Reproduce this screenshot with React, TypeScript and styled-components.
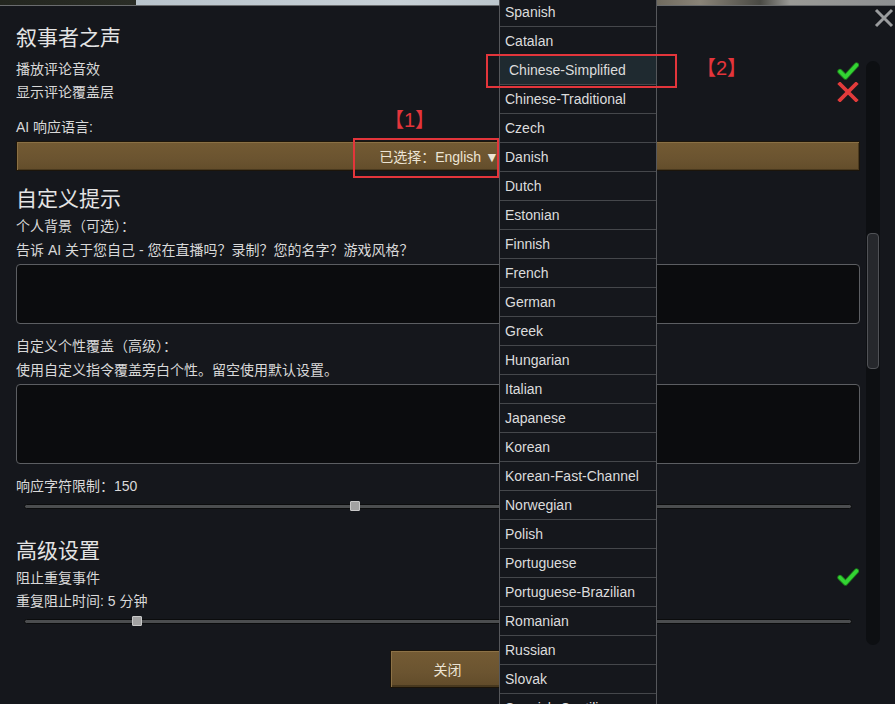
import styled, { createGlobalStyle } from "styled-components";

const GlobalStyle = createGlobalStyle`
  html, body {
    margin: 0;
    padding: 0;
    background: #15171c;
  }
  * {
    box-sizing: border-box;
  }
`;

const languages = [
  "Spanish",
  "Catalan",
  "Chinese-Simplified",
  "Chinese-Traditional",
  "Czech",
  "Danish",
  "Dutch",
  "Estonian",
  "Finnish",
  "French",
  "German",
  "Greek",
  "Hungarian",
  "Italian",
  "Japanese",
  "Korean",
  "Korean-Fast-Channel",
  "Norwegian",
  "Polish",
  "Portuguese",
  "Portuguese-Brazilian",
  "Romanian",
  "Russian",
  "Slovak",
  "Spanish-Castilian",
];

const CheckIcon = () => (
  <svg width="22" height="18" viewBox="0 0 22 18">
    <path
      d="M3 9.5 L8.5 15 L19.5 3"
      fill="none"
      stroke="#1d7a1d"
      strokeWidth="5.4"
      strokeLinecap="round"
      strokeLinejoin="round"
    />
    <path
      d="M3 9.5 L8.5 15 L19.5 3"
      fill="none"
      stroke="#33d433"
      strokeWidth="3.6"
      strokeLinecap="round"
      strokeLinejoin="round"
    />
  </svg>
);

const CrossIcon = () => (
  <svg width="22" height="20" viewBox="0 0 22 20">
    <path
      d="M3 2 L19 18 M19 2 L3 18"
      fill="none"
      stroke="#e23b3b"
      strokeWidth="3.8"
      strokeLinecap="square"
    />
  </svg>
);

const App = () => {
  return (
    <Screen>
      <GlobalStyle />
      <TopStrip />
      <Panel>
        <Content>
          <Title>叙事者之声</Title>
          <ToggleRow $gap={4}>
            <Label>播放评论音效</Label>
            <IconSlot $offset={2}>
              <CheckIcon />
            </IconSlot>
          </ToggleRow>
          <ToggleRow>
            <Label>显示评论覆盖层</Label>
            <IconSlot $offset={0}>
              <CrossIcon />
            </IconSlot>
          </ToggleRow>

          <Label $gap={12}>AI 响应语言:</Label>
          <SelectButton>已选择：English ▼</SelectButton>

          <Title $gap={13}>自定义提示</Title>
          <Label>个人背景（可选）：</Label>
          <Label>告诉 AI 关于您自己 - 您在直播吗？录制？您的名字？游戏风格？</Label>
          <TextBox $height={60} />

          <Label $gap={10}>自定义个性覆盖（高级）：</Label>
          <Label>使用自定义指令覆盖旁白个性。留空使用默认设置。</Label>
          <TextBox $height={80} />

          <Label $gap={10}>响应字符限制：150</Label>
          <Slider>
            <Track />
            <Thumb style={{ left: `${0.4 * 100}%` }} />
          </Slider>

          <Title $gap={24}>高级设置</Title>
          <ToggleRow>
            <Label>阻止重复事件</Label>
            <IconSlot $offset={-1}>
              <CheckIcon />
            </IconSlot>
          </ToggleRow>
          <Label>重复阻止时间: 5 分钟</Label>
          <Slider>
            <Track />
            <Thumb style={{ left: `${0.136 * 100}%` }} />
          </Slider>
        </Content>
        <ScrollTrack>
          <ScrollThumb />
        </ScrollTrack>
      </Panel>
      <Footer>
        <CloseButton>关闭</CloseButton>
      </Footer>

      <WindowClose>
        <svg width="20" height="20" viewBox="0 0 20 20">
          <path
            d="M2 2 L18 18 M18 2 L2 18"
            stroke="#9a9c9e"
            strokeWidth="3"
            fill="none"
          />
        </svg>
      </WindowClose>

      <LanguageList>
        {languages.map((lang) => (
          <LanguageItem key={lang} $active={lang === "Chinese-Simplified"}>
            {lang}
          </LanguageItem>
        ))}
      </LanguageList>

      <Marker $x={353} $y={138} $w={146} $h={40} />
      <MarkerLabel $x={384} $y={106}>【1】</MarkerLabel>
      <Marker $x={486} $y={54} $w={191} $h={34} />
      <MarkerLabel $x={696} $y={54}>【2】</MarkerLabel>
    </Screen>
  );
};

const Screen = styled.div`
  position: relative;
  width: 895px;
  height: 704px;
  overflow: hidden;
  background: #15171c;
  color: #d9d9d9;
  font-family: "Liberation Sans", "Noto Sans CJK SC", sans-serif;
  font-size: 14px;
`;

const TopStrip = styled.div`
  height: 6px;
  border-bottom: 1px solid #6a6c6e;
  background: linear-gradient(
    90deg,
    #23261f 0px,
    #2a2d26 136px,
    #b9c4cc 136px,
    #c7d0d6 400px,
    #bcc6cc 499px,
    #6f6a5e 656px,
    #8a8478 700px,
    #4a4a44 760px,
    #9a9a96 790px,
    #8e9092 895px
  );
`;

const Panel = styled.div`
  display: flex;
  align-items: flex-start;
  padding-left: 16px;
`;

const Content = styled.div`
  width: 844px;
  display: flex;
  flex-direction: column;
`;

const Title = styled.div<{ $gap?: number }>`
  margin-top: ${(p) => p.$gap ?? 17}px;
  height: 30px;
  line-height: 30px;
  font-size: 21px;
  color: #e4e4e4;
`;

const Label = styled.div<{ $gap?: number }>`
  margin-top: ${(p) => p.$gap ?? 0}px;
  height: 24px;
  line-height: 24px;
  font-size: 14px;
  color: #d9d9d9;
  white-space: nowrap;
`;

const ToggleRow = styled.div<{ $gap?: number }>`
  display: flex;
  align-items: center;
  justify-content: space-between;
  height: 23px;
  margin-top: ${(p) => p.$gap ?? 0}px;
  padding-right: 1px;
`;

const IconSlot = styled.div<{ $offset: number }>`
  display: flex;
  transform: translateY(${(p) => p.$offset}px);
`;

const SelectButton = styled.div`
  height: 30px;
  margin-top: 2px;
  display: flex;
  align-items: center;
  justify-content: center;
  background: linear-gradient(180deg, #735a33 0%, #6b5430 60%, #634d2b 100%);
  border: 1px solid #1c150b;
  box-shadow: inset 1px 1px 0 #8a7044, inset -1px -1px 0 #4a3a1f;
  color: #ece4d4;
  font-size: 14px;
  padding-left: 2px;
`;

const TextBox = styled.div<{ $height: number }>`
  height: ${(p) => p.$height}px;
  margin-top: 2px;
  background: #0b0c0e;
  border: 1px solid #5c5e62;
  border-radius: 4px;
`;

const Slider = styled.div`
  position: relative;
  height: 12px;
  margin: 2px 8px 0;
  display: flex;
  align-items: center;
`;

const Track = styled.div`
  flex: 1;
  height: 5px;
  background: #4b4d4f;
  border: 1px solid #0b0c0d;
  border-radius: 3px;
`;

const Thumb = styled.div`
  position: absolute;
  top: 1px;
  width: 10px;
  height: 10px;
  margin-left: -5px;
  background: #a2a2a2;
  border: 1px solid #c8c8c8;
  border-radius: 1px;
`;

const ScrollTrack = styled.div`
  width: 14px;
  height: 584px;
  margin-top: 55px;
  margin-left: 6px;
  padding: 0 1px;
  background: #0d0f12;
  border-radius: 7px;
  display: flex;
  flex-direction: column;
`;

const ScrollThumb = styled.div`
  margin-top: 172px;
  height: 136px;
  background: #26282c;
  border: 1px solid #505256;
  border-radius: 4px;
`;

const Footer = styled.div`
  display: flex;
  justify-content: center;
  margin-top: 5px;
`;

const CloseButton = styled.div`
  width: 116px;
  height: 38px;
  display: flex;
  align-items: center;
  justify-content: center;
  background: linear-gradient(180deg, #745b34 0%, #6b5430 60%, #614b2a 100%);
  border: 1px solid #1a1309;
  box-shadow: inset 1px 1px 0 #8d7246, inset -1px -2px 0 #48381e;
  color: #ece4d4;
  font-size: 14px;
`;

const WindowClose = styled.div`
  position: absolute;
  top: 8px;
  right: 1px;
  display: flex;
`;

const LanguageList = styled.div`
  position: absolute;
  top: -2px;
  left: 499px;
  width: 158px;
  background: #15171c;
  border-left: 1px solid #55575b;
  border-right: 1px solid #55575b;
`;

const LanguageItem = styled.div<{ $active: boolean }>`
  height: 29px;
  line-height: 28px;
  border-bottom: 1px solid #45474b;
  padding-left: ${(p) => (p.$active ? 9 : 5)}px;
  background: ${(p) => (p.$active ? "#1f2a30" : "transparent")};
  color: #dcdcdc;
  font-size: 14px;
  white-space: nowrap;
`;

const Marker = styled.div<{ $x: number; $y: number; $w: number; $h: number }>`
  position: absolute;
  left: ${(p) => p.$x}px;
  top: ${(p) => p.$y}px;
  width: ${(p) => p.$w}px;
  height: ${(p) => p.$h}px;
  border: 2px solid #e3353b;
`;

const MarkerLabel = styled.div<{ $x: number; $y: number }>`
  position: absolute;
  left: ${(p) => p.$x}px;
  top: ${(p) => p.$y}px;
  color: #e3353b;
  font-size: 20px;
  line-height: 28px;
  font-family: "Liberation Sans", "Noto Sans CJK SC", sans-serif;
`;

export default App;
